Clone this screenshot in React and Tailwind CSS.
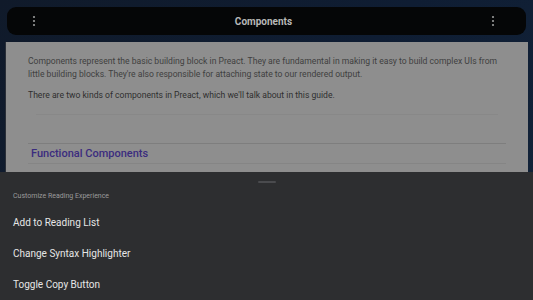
export default function App() {
  const Kebab = () => (
    <svg width="4" height="12" viewBox="0 0 4 12" className="block">
      <circle cx="2" cy="2" r="1.1" fill="#9a9a9a" />
      <circle cx="2" cy="6" r="1.1" fill="#9a9a9a" />
      <circle cx="2" cy="10" r="1.1" fill="#9a9a9a" />
    </svg>
  );
  return (
    <div
      className="relative w-[533px] h-[300px] overflow-hidden bg-[linear-gradient(135deg,#101a2a,#0f1d33_50%,#12243a)]"
      style={{ fontFamily: 'Roboto, "Noto Sans", sans-serif' }}
    >
      <div className="pt-[7px] px-[7px]">
        <div className="h-[28px] rounded-[9px] bg-[#050607] flex items-center justify-between pl-[25px] pr-[31px]">
          <Kebab />
          <span className="text-[10px] font-bold text-[#b8b8b8]">Components</span>
          <Kebab />
        </div>
      </div>
      <div className="mt-[7px] mx-[5px] h-[300px] bg-[#8e8e8e] border-l border-[#2a2f38]">
        <div className="px-[22px] pt-[13px] text-[8.6px] leading-[13px]">
          <p className="text-[#3f3f3f]">
            Components represent the basic building block in Preact. They are fundamental in making it easy to build complex UIs from little building blocks. They're also responsible for attaching state to our rendered output.
          </p>
          <p className="mt-[8px] text-[#2e2e2e]">
            There are two kinds of components in Preact, which we'll talk about in this guide.
          </p>
          <div className="mt-[12px] mx-[8px] h-px bg-[#888888]" />
          <div className="mt-[28px] h-px bg-[#7e7e7e]" />
          <h2 className="pl-[3px] pt-[2px] h-[19px] text-[11px] font-medium text-[#3b2c7e] leading-[16px]">
            Functional Components
          </h2>
          <div className="h-px bg-[#858585]" />
          <p className="mt-[6px] text-[#3f3f3f] whitespace-nowrap">
            Functional components are plain functions that receive props as the first argument. The function name must start with an
          </p>
        </div>
      </div>
      <div className="absolute left-0 right-0 top-[172px] bottom-0 bg-[#2d2e30]">
        <div className="flex justify-center pt-[9px]">
          <div className="w-[18px] h-[2px] rounded bg-[#4a4b4e]" />
        </div>
        <div className="px-[13px]">
          <div className="mt-[8px] text-[7px] text-[#9b9b9b] leading-[10px]">Customize Reading Experience</div>
          <div className="mt-[15px] flex flex-col gap-[18px] text-[10px] leading-[13px] text-[#e6e6e6]">
            <div>Add to Reading List</div>
            <div>Change Syntax Highlighter</div>
            <div>Toggle Copy Button</div>
          </div>
        </div>
      </div>
    </div>
  );
}
